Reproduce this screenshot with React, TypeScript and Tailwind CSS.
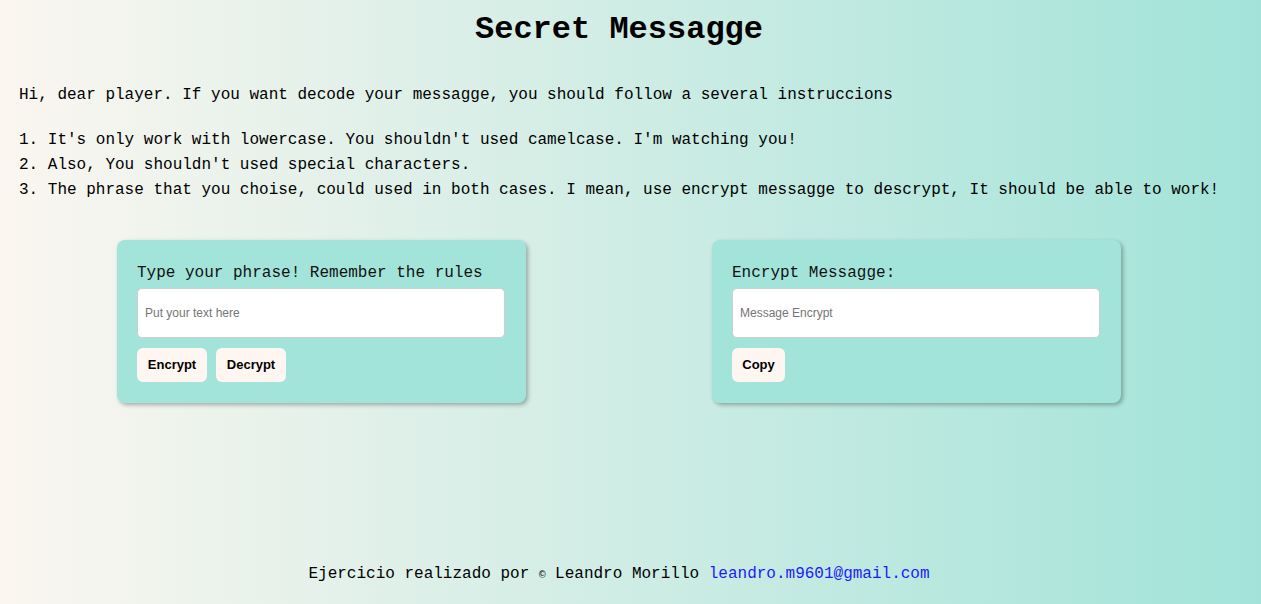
import React from "react";

const mono = { fontFamily: '"Liberation Mono", "DejaVu Sans Mono", monospace' };

function Card({ label, placeholder, buttons }: { label: string; placeholder: string; buttons: { t: string; w: string }[] }) {
  return (
    <div className="w-[409px] h-[163px] bg-[#a3e4da] rounded-[8px] shadow-[2px_2px_4px_rgba(0,0,0,0.3)] px-[20px] pt-[22px]">
      <div className="text-[16px] leading-[22px] text-[#111]" style={mono}>{label}</div>
      <input
        className="mt-[4px] w-[368px] h-[50px] bg-white rounded-[5px] border border-[#cfcfcf] px-[7px] text-[12px] outline-none placeholder:text-[#757575]"
        style={{ fontFamily: '"Liberation Sans", Arial, sans-serif' }}
        placeholder={placeholder}
      />
      <div className="mt-[10px] flex gap-[9px]">
        {buttons.map((b) => (
          <button
            key={b.t}
            className={`${b.w} h-[34px] bg-[#fff6f2] rounded-[6px] text-[13px] font-bold text-black`}
            style={{ fontFamily: '"Liberation Sans", Arial, sans-serif' }}
          >
            {b.t}
          </button>
        ))}
      </div>
    </div>
  );
}

export default function App() {
  return (
    <div className="w-full h-[604px] overflow-hidden bg-[linear-gradient(to_right,#fbf6f0,#a2e3d9)] text-black" style={mono}>
      <div className="ml-[19px] w-[1200px] flex flex-col h-full">
        <h1 className="pt-[6px] text-center text-[32px] leading-[48px] font-bold">Secret Messagge</h1>
        <p className="mt-[29px] text-[16px] leading-[25px] whitespace-nowrap">
          Hi, dear player. If you want decode your messagge, you should follow a several instruccions
        </p>
        <div className="mt-[20px] text-[16px] leading-[25px] whitespace-nowrap">
          <div>1. It's only work with lowercase. You shouldn't used camelcase. I'm watching you!</div>
          <div>2. Also, You shouldn't used special characters.</div>
          <div>3. The phrase that you choise, could used in both cases. I mean, use encrypt messagge to descrypt, It should be able to work!</div>
        </div>
        <div className="mt-[37px] px-[98px] flex justify-between">
          <Card
            label="Type your phrase! Remember the rules"
            placeholder="Put your text here"
            buttons={[
              { t: "Encrypt", w: "w-[70px]" },
              { t: "Decrypt", w: "w-[70px]" },
            ]}
          />
          <Card label="Encrypt Messagge:" placeholder="Message Encrypt" buttons={[{ t: "Copy", w: "w-[53px]" }]} />
        </div>
        <footer className="mt-auto mb-[16px] text-center text-[16px] leading-[25px]">
          Ejercicio realizado por <span className="text-[11px]">©</span> Leandro Morillo{" "}
          <a className="text-[#1a1aff]">leandro.m9601@gmail.com</a>
        </footer>
      </div>
    </div>
  );
}
